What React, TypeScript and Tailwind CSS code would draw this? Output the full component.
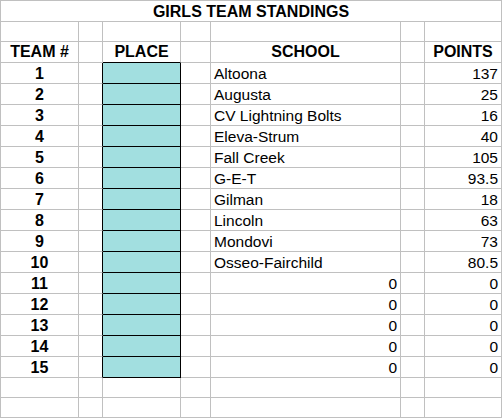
const teams = [
  { school: 'Altoona', points: '137' },
  { school: 'Augusta', points: '25' },
  { school: 'CV Lightning Bolts', points: '16' },
  { school: 'Eleva-Strum', points: '40' },
  { school: 'Fall Creek', points: '105' },
  { school: 'G-E-T', points: '93.5' },
  { school: 'Gilman', points: '18' },
  { school: 'Lincoln', points: '63' },
  { school: 'Mondovi', points: '73' },
  { school: 'Osseo-Fairchild', points: '80.5' },
  { school: null, points: '0' },
  { school: null, points: '0' },
  { school: null, points: '0' },
  { school: null, points: '0' },
  { school: null, points: '0' },
]

const cell = 'border-r border-b border-[#c0c0c0] overflow-visible whitespace-nowrap'

function BlankRow() {
  return (
    <>
      <div className={`${cell} h-[20px]`} />
      <div className={`${cell} h-[20px]`} />
      <div className={`${cell} h-[20px]`} />
      <div className={`${cell} h-[20px]`} />
      <div className={`${cell} h-[20px]`} />
      <div className={`${cell} h-[20px]`} />
      <div className={`${cell} h-[20px]`} />
    </>
  )
}

export default function App() {
  return (
    <div
      className="w-[503px] h-[418px] bg-white text-black"
      style={{ fontFamily: '"Liberation Sans", Arial, sans-serif' }}
    >
      <div className="w-[502px] border-l border-t border-[#c0c0c0] grid grid-cols-[78px_24px_78px_30px_190px_24px_77px]">
        {/* Titre */}
        <div className={`${cell} col-span-7 h-[21px] text-center font-bold text-[16px] leading-[21px]`}>
          GIRLS TEAM STANDINGS
        </div>

        {/* Ligne vide */}
        <BlankRow />

        {/* En-têtes */}
        <div className={`${cell} h-[21px] text-center font-bold text-[16px] leading-[20px]`}>TEAM #</div>
        <div className={`${cell} h-[21px]`} />
        <div className={`${cell} h-[21px] border-b-black text-center font-bold text-[16px] leading-[20px]`}>PLACE</div>
        <div className={`${cell} h-[21px]`} />
        <div className={`${cell} h-[21px] text-center font-bold text-[16px] leading-[20px]`}>SCHOOL</div>
        <div className={`${cell} h-[21px]`} />
        <div className={`${cell} h-[21px] text-center font-bold text-[16px] leading-[20px]`}>POINTS</div>

        {/* Équipes */}
        {teams.map((t, i) => (
          <div key={i} className="contents">
            <div className={`${cell} h-[21px] text-center font-bold text-[16px] leading-[21px]`}>{i + 1}</div>
            <div className={`${cell} h-[21px] border-r-black`} />
            <div className={`${cell} h-[21px] bg-[#a2dfe0] border-r-black border-b-black`} />
            <div className={`${cell} h-[21px]`} />
            {t.school ? (
              <div className={`${cell} h-[21px] pl-[3px] text-[15.5px] leading-[21px]`}>{t.school}</div>
            ) : (
              <div className={`${cell} h-[21px] pr-[3px] text-right text-[15.5px] leading-[21px]`}>0</div>
            )}
            <div className={`${cell} h-[21px]`} />
            <div className={`${cell} h-[21px] pr-[3px] text-right text-[15.5px] leading-[21px]`}>{t.points}</div>
          </div>
        ))}

        <BlankRow />
        <BlankRow />
      </div>
    </div>
  )
}
